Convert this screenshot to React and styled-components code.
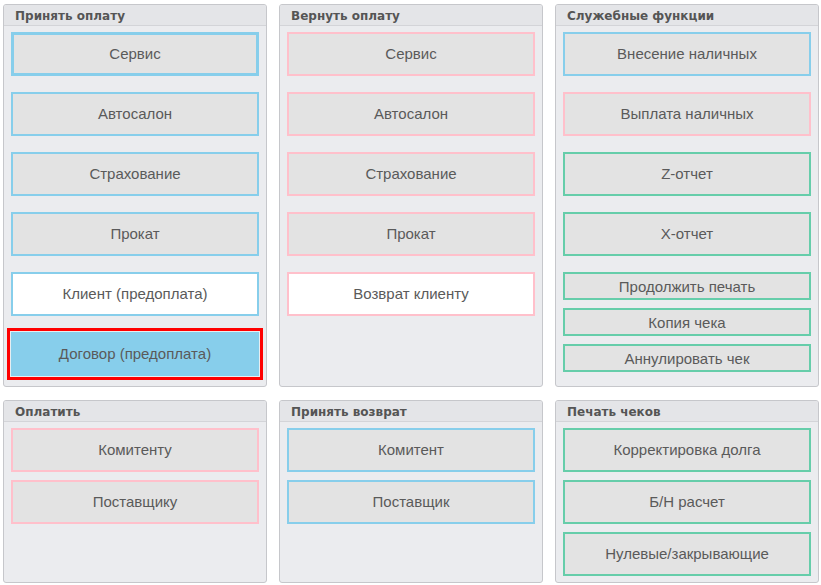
import React from "react";
import styled, { createGlobalStyle } from "styled-components";

const Global = createGlobalStyle`
  html, body { margin: 0; padding: 0; background: #ffffff; }
  body { font-family: "Liberation Sans", Arial, sans-serif; }
`;

const Grid = styled.div`
  display: grid;
  grid-template-columns: repeat(3, 264px);
  grid-template-rows: 383px 183px;
  column-gap: 12px;
  row-gap: 13px;
  padding: 4px 0 0 3px;
`;

const Panel = styled.section`
  box-sizing: border-box;
  background: #ebecef;
  border: 1px solid #c6c7cb;
  border-radius: 3px;
  display: flex;
  flex-direction: column;
  overflow: hidden;
`;

const Header = styled.div`
  box-sizing: border-box;
  height: 21px;
  padding: 2px 0 0 11px;
  line-height: 18px;
  background: #e4e5e8;
  border-bottom: 1px solid #d3d4d8;
  font-family: "DejaVu Sans", Verdana, sans-serif;
  font-size: 12px;
  font-weight: bold;
  color: #555555;
`;

const Body = styled.div`
  display: flex;
  flex-direction: column;
  gap: ${(p) => p.$gap}px;
  padding: 6px 7px 0 7px;
`;

const SubStack = styled.div`
  display: flex;
  flex-direction: column;
  gap: 8px;
`;

const colors = {
  blue: "#87ceeb",
  pink: "#ffc0cb",
  green: "#66cdaa",
};

const Button = styled.button`
  box-sizing: border-box;
  height: ${(p) => (p.$small ? 28 : 44)}px;
  width: 100%;
  margin: 0;
  padding: ${(p) => (p.$small ? "0" : "0 0 2px 0")};
  border: ${(p) => (p.$thick ? 3 : 2)}px solid ${(p) => colors[p.$tone]};
  background: ${(p) =>
    p.$active ? "#87ceeb" : p.$white ? "#ffffff" : "#e3e3e3"};
  color: #5a5a5a;
  font-family: "Liberation Sans", Arial, sans-serif;
  font-size: 15px;
  cursor: pointer;
  box-shadow: ${(p) =>
    p.$active ? "0 0 0 1px #e6eef2, 0 0 0 4px #ff0000" : "none"};
`;

export default function App() {
  return (
    <>
      <Global />
      <Grid>
        <Panel>
          <Header>Принять оплату</Header>
          <Body $gap={16}>
            <Button $tone="blue" $thick>Сервис</Button>
            <Button $tone="blue">Автосалон</Button>
            <Button $tone="blue">Страхование</Button>
            <Button $tone="blue">Прокат</Button>
            <Button $tone="blue" $white>Клиент (предоплата)</Button>
            <Button $tone="blue" $active>Договор (предоплата)</Button>
          </Body>
        </Panel>
        <Panel>
          <Header>Вернуть оплату</Header>
          <Body $gap={16}>
            <Button $tone="pink">Сервис</Button>
            <Button $tone="pink">Автосалон</Button>
            <Button $tone="pink">Страхование</Button>
            <Button $tone="pink">Прокат</Button>
            <Button $tone="pink" $white>Возврат клиенту</Button>
          </Body>
        </Panel>
        <Panel>
          <Header>Служебные функции</Header>
          <Body $gap={16}>
            <Button $tone="blue">Внесение наличных</Button>
            <Button $tone="pink">Выплата наличных</Button>
            <Button $tone="green">Z-отчет</Button>
            <Button $tone="green">X-отчет</Button>
            <SubStack>
              <Button $tone="green" $small>Продолжить печать</Button>
              <Button $tone="green" $small>Копия чека</Button>
              <Button $tone="green" $small>Аннулировать чек</Button>
            </SubStack>
          </Body>
        </Panel>
        <Panel>
          <Header>Оплатить</Header>
          <Body $gap={8}>
            <Button $tone="pink">Комитенту</Button>
            <Button $tone="pink">Поставщику</Button>
          </Body>
        </Panel>
        <Panel>
          <Header>Принять возврат</Header>
          <Body $gap={8}>
            <Button $tone="blue">Комитент</Button>
            <Button $tone="blue">Поставщик</Button>
          </Body>
        </Panel>
        <Panel>
          <Header>Печать чеков</Header>
          <Body $gap={8}>
            <Button $tone="green">Корректировка долга</Button>
            <Button $tone="green">Б/Н расчет</Button>
            <Button $tone="green">Нулевые/закрывающие</Button>
          </Body>
        </Panel>
      </Grid>
    </>
  );
}
